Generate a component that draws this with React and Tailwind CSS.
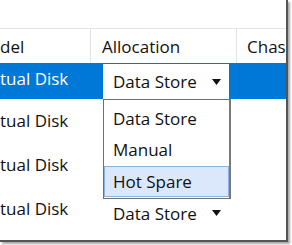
import React from 'react';

const font = { fontFamily: '"Open Sans", "Noto Sans", sans-serif' };

function Caret({ className = '' }) {
  return (
    <svg width="9" height="6" viewBox="0 0 9 6" className={className}>
      <path d="M0 0h9L4.5 6z" fill="#111" />
    </svg>
  );
}

function Combo() {
  return (
    <div className="flex items-center h-full pl-[10px] pr-[5px] w-[126px]">
      <span>Data Store</span>
      <Caret className="ml-auto mr-[3px]" />
    </div>
  );
}

export default function App() {
  return (
    <div className="w-[292px] h-[245px] bg-white overflow-hidden" style={font}>
      <div className="relative w-[288px] h-[242px] bg-white border-r-2 border-b-2 border-[#555] shadow-[2px_2px_2px_#a8a8a8] overflow-hidden text-[17px] leading-none text-[#111]">
        <div className="h-[28px]" />
        {/* header */}
        <div className="flex h-[35px] border-t border-[#e3e3e3]">
          <div className="w-[91px] shrink-0 flex items-center border-r border-[#e3e3e3]">
            <span>del</span>
          </div>
          <div className="w-[146px] shrink-0 flex items-center pl-[11px] border-r border-[#e3e3e3]">
            <span>Allocation</span>
          </div>
          <div className="flex-1 min-w-0 flex items-center pl-[10px] whitespace-nowrap">
            <span>Chassis</span>
          </div>
        </div>
        {/* row 1 selected */}
        <div className="flex h-[36px] bg-[#0078d7]">
          <div className="w-[103px] shrink-0 flex items-center pb-[6px] text-white">
            <span>tual Disk</span>
          </div>
          <div className="mt-[1px] bg-white h-[35px] flex items-center shrink-0">
            <Combo />
          </div>
          <div className="flex-1" />
        </div>
        {[0, 1, 2].map((i) => (
          <div key={i} className="flex h-[44px]">
            <div className="w-[103px] shrink-0 flex items-center pb-[2px]">
              <span>tual Disk</span>
            </div>
            {i === 2 && (
              <div className="h-full flex items-center pt-[8px]">
                <Combo />
              </div>
            )}
          </div>
        ))}
        {/* dropdown popup */}
        <div className="absolute left-[103px] top-[99px] w-[128px] h-[100px] bg-white border border-[#6f6f6f] border-r-2 border-r-[#7a7a7a] flex flex-col pt-[1px]">
          <div className="h-[32px] flex items-center pl-[9px] pt-[2px]">Data Store</div>
          <div className="h-[33px] flex items-center pl-[9px]">Manual</div>
          <div className="h-[31px] flex items-center pl-[8px] bg-[#dbe8fb] border border-[#8db2e2]">Hot Spare</div>
        </div>
      </div>
    </div>
  );
}
